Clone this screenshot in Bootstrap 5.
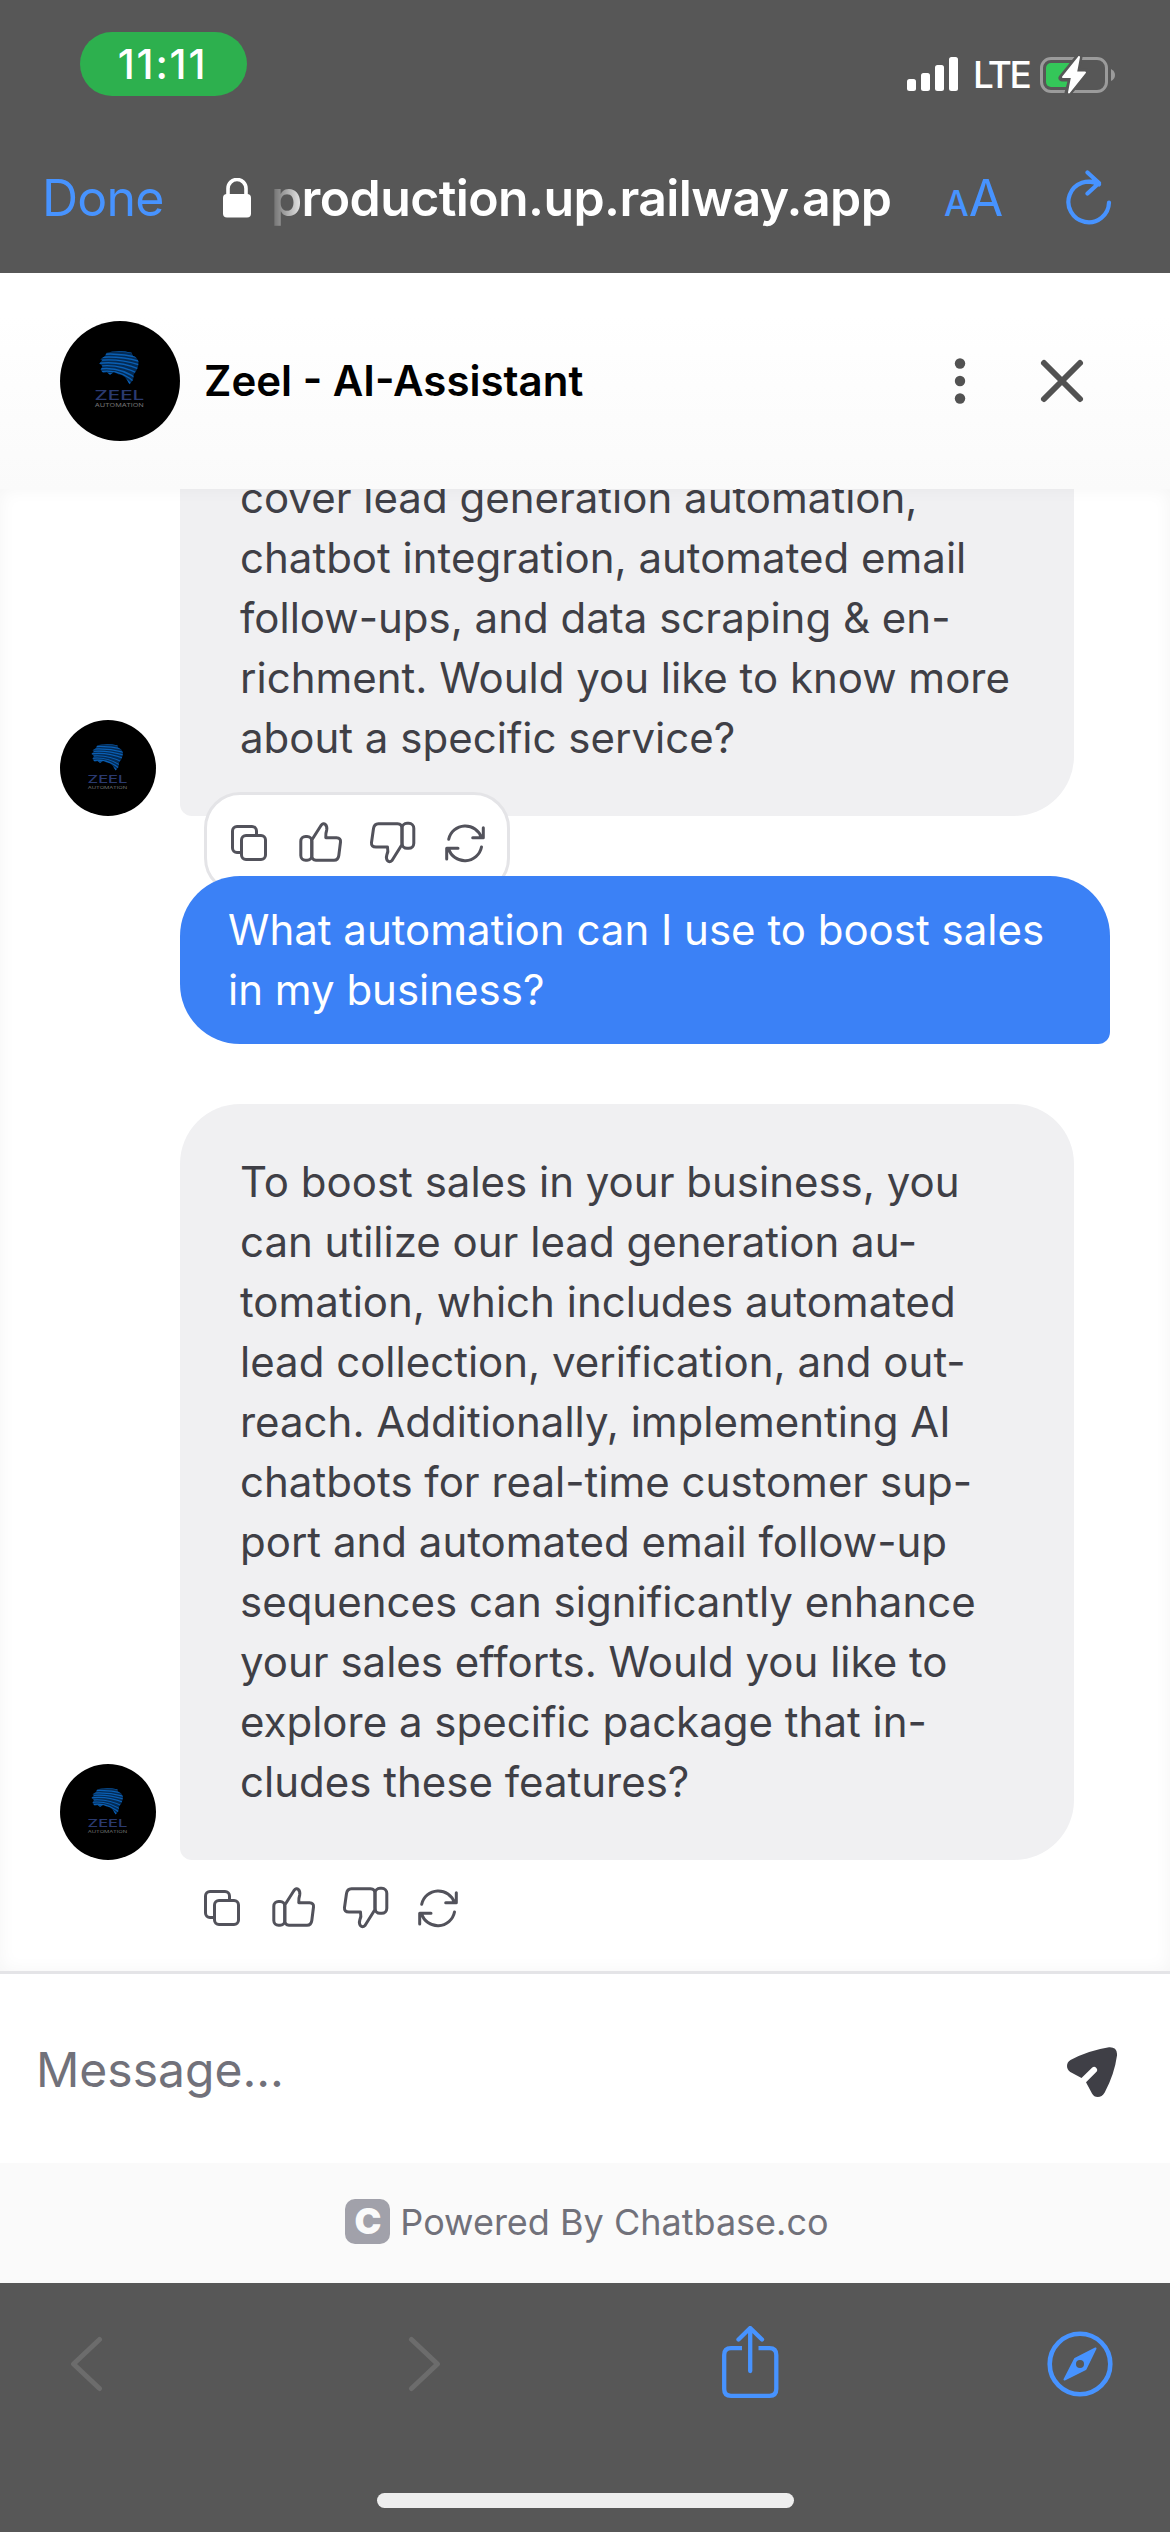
<!DOCTYPE html>
<html lang="en">
<head>
<meta charset="utf-8">
<meta name="viewport" content="width=device-width, initial-scale=1">
<title>Zeel - AI-Assistant</title>
<link href="https://cdn.jsdelivr.net/npm/bootstrap@5.3.0/dist/css/bootstrap.min.css" rel="stylesheet">
<style>
body{font-family:Inter,"Liberation Sans",sans-serif;width:1170px;height:2532px;overflow:hidden;background:#fff}
svg{display:block;flex:none}
.chrome-bar{background:#575757;color:#fff}
.status-row{height:128px;padding:0 55px 0 80px}
.time-pill{width:167px;height:64px;margin-top:32px;padding:1px 2px 0 0;background:#2db04e;border-radius:32px;font-size:41px;font-weight:500;letter-spacing:1.8px}
.signal-group{margin-top:50px;height:50px}
.lte{font-size:37px;font-weight:500;line-height:50px;width:52px;margin:0 15px;letter-spacing:-2.6px}
.nav-row{height:145px;padding:0 58px 6px 42px}
.ios-blue{color:#4793ff}
.done-link{width:181px;font-size:50px;letter-spacing:-.8px;line-height:1}
.url-text{width:628px;margin-left:20px;font-size:50px;font-weight:600;line-height:72px;letter-spacing:-.6px;-webkit-mask-image:linear-gradient(90deg,rgba(0,0,0,.1),#000 36px)}
.text-size{width:62px;margin-left:45px;padding-top:12px;line-height:60px}
.text-size .small-a{font-size:35px;font-weight:500}
.text-size .big-a{font-size:50px}
.chat-head{height:216px;padding:0 84px 0 60px;background:linear-gradient(#fff 20%,#fafafa)}
.chat-title{font-size:42px;font-weight:600;color:#000;margin-left:24px;line-height:60px;padding-bottom:1px}
.chat-body{height:1482px;overflow:hidden;padding:0 60px 39px}
.chat-body::after{content:"";position:absolute;inset:0;box-shadow:inset 0 0 18px rgba(0,0,0,.045);pointer-events:none;z-index:5}
.bubble{font-size:42px;line-height:60px;color:#3f3f46;white-space:nowrap}
.bot-bubble{width:894px;margin-left:24px;padding:48px 60px;background:#f0f0f2;border-radius:60px 60px 60px 12px}
.user-bubble{width:930px;height:168px;margin:60px 0 60px 120px;padding:24px 48px;background:#3b81f6;color:#fff;border-radius:60px 60px 12px 60px;position:relative;z-index:2}
.action-icons{gap:24px;color:#52525b}
.action-icons svg{fill:none;stroke:currentColor;stroke-width:3;stroke-linecap:round;stroke-linejoin:round}
.float-actions{position:absolute;left:144px;bottom:-78px;width:306px;height:102px;border:3px solid #e4e4e7;border-radius:36px;background:#fff;padding-left:18px;z-index:1}
.row-actions{margin:24px 0 0 138px}
.composer{height:192px;border-top:3px solid #e4e4e7;padding:0 53px 0 36px}
.placeholder-text{font-size:48px;color:#71717a;padding-top:2px}
.send-icon{margin-top:6px}
.powered{height:120px;background:#fafafa;color:#71717a;font-size:36px;padding:0 0 3px 4px}
.c-logo{width:45px;height:45px;border-radius:10px;background:#a1a1aa;color:#fafafa;font-size:36px;font-weight:900;line-height:45px;margin-right:10px}
.tool-row{height:162px;padding:0 57px 0 70px}
.forward-icon{margin-left:303px}
.share-icon{margin-left:279px}
.home-area{height:87px}
.home-pill{width:417px;height:15px;border-radius:8px;background:#eee;margin-top:48px}
</style>
</head>
<body>
<svg width="0" height="0" class="position-absolute" aria-hidden="true">
  <defs>
    <clipPath id="brainClip"><path d="M37.300 25.300Q47 23 57.300 25.300L58.500 28Q62 29 63 33L62.500 36L61.500 39L59 42.700L58.500 47L55.500 50.700Q54 47 52 45Q49 42.500 46.700 42.500L43 41L40 43L37.500 41L34.500 41.500L32.500 39L34 36L31.500 34L34 31L32.300 30.500L36 28Z"/></clipPath>
    <symbol id="zeel" viewBox="0 0 96 96">
      <circle cx="48" cy="48" r="48" fill="#000"/>
      <g clip-path="url(#brainClip)">
        <path fill="#042b55" d="M30 22H64V51H30Z"/>
        <path fill="none" stroke="#0a5fb4" stroke-width="1.150" d="M30 25Q47 22 66 27M30 27Q48 25 66 30M30 29.300Q48 27.500 66 33M30 31.600Q48 29.500 66 36M30 34Q48 31.500 66 39.500M30 36.300Q48 33.500 66 44M30 38.600Q48 35.500 64 48M30 41Q48 37 62 51M30 43Q48 38.500 59 53M34 44.500Q49 39.500 56 54"/>
      </g>
      <text x="27.600" y="63" font-size="10.200" textLength="39.800" lengthAdjust="spacingAndGlyphs" fill="#2a3a70" font-weight="500">ZEEL</text>
      <text x="27.800" y="68.700" font-size="4" textLength="39.300" lengthAdjust="spacingAndGlyphs" fill="#707070">AUTOMATION</text>
    </symbol>
    <symbol id="copy" viewBox="0 0 48 48"><path d="M31.500 15V12A4.500 4.500 0 0 0 27 7.500H12A4.500 4.500 0 0 0 7.500 12V29A4.500 4.500 0 0 0 12 33.500H15"/><rect x="16.500" y="16.500" width="24" height="24" rx="4.500"/></symbol>
    <symbol id="thumb" viewBox="0 0 48 48"><rect x="3.800" y="17.500" width="11" height="23.700" rx="4.700"/><path d="M14.800 21L24 6.500Q26.300 3.500 28.500 5.600Q30.300 7.500 29.700 11Q28.500 14.500 28.800 18.700H39.500Q44 19 43.500 23L41.800 36.500Q41.200 41.200 37 41.300H19Q15 41 14.800 36.500Z"/></symbol>
    <symbol id="thumbDown" viewBox="0 0 48 48"><rect x="33" y="4.300" width="11.800" height="25" rx="5"/><path d="M33 25.500L23 41.500Q20.500 44 18.400 41.500Q16.800 39.500 17.800 36Q19.500 32.500 18.500 28H7Q2 28 2.500 23.500L4.500 9.500Q5.200 4.800 9.500 4.700H28.500Q33 4.800 33 9.500Z"/></symbol>
    <symbol id="renew" viewBox="0 0 48 48"><path d="M7.700 20.300A17 17 0 0 1 40.500 18.700M42.300 8.700V18.700H31.700M40.500 28A17 17 0 0 1 7.500 29.500M5.700 40V29.300H17"/></symbol>
  </defs>
</svg>

<header class="chrome-bar">
  <div class="status-row d-flex justify-content-between align-items-start">
    <div class="time-pill d-flex align-items-center justify-content-center">11:11</div>
    <div class="signal-group d-flex">
      <svg width="51" height="50" viewBox="907 50 51 50" fill="#fff"><rect x="907" y="79" width="9" height="12" rx="2.500"/><rect x="921" y="73" width="9" height="18" rx="2.500"/><rect x="935" y="65" width="9" height="26" rx="2.500"/><rect x="949" y="57" width="9" height="34" rx="2.500"/></svg>
      <div class="lte">LTE</div>
      <svg width="75" height="50" viewBox="1040 49 75 50"><rect x="1041.500" y="57.500" width="65" height="33" rx="9.500" fill="none" stroke="#9b9b9b" stroke-width="3"/><path d="M1111 68Q1115 70 1115 74T1111 80Z" fill="#9b9b9b"/><rect x="1046" y="62" width="30" height="24" rx="5" fill="#34c759"/><path d="M1073 62H1090V86H1067Z" fill="#575757"/><path d="M1079 56L1062 77H1072L1068 92L1086 71H1076Z" fill="#fff" stroke="#575757" stroke-width="7" stroke-linejoin="round"/><path d="M1079 56L1063 76H1072L1069 91.500L1085 71.500H1076Z" fill="#fff" stroke="#fff" stroke-width="2" stroke-linejoin="round"/></svg>
    </div>
  </div>
  <div class="nav-row d-flex align-items-center">
    <div class="done-link ios-blue">Done</div>
    <svg width="28" height="40" viewBox="223 178 28 40"><path d="M228 196V188.500A9 9 0 0 1 246 188.500V196" fill="none" stroke="#fff" stroke-width="3.600"/><rect x="223" y="194" width="28" height="23.500" rx="4" fill="#fff"/></svg>
    <div class="url-text text-nowrap">production.up.railway.app</div>
    <div class="text-size ios-blue text-nowrap"><span class="small-a">A</span><span class="big-a">A</span></div>
    <svg class="ms-auto" width="46" height="56" viewBox="1067 171 46 56" fill="none" stroke="#4793ff" stroke-width="4.200" stroke-linecap="round" stroke-linejoin="round"><path d="M1110 203.500A20.300 20.300 0 1 1 1100 185.500M1088.500 173.500L1100 184L1088.500 194.500M1100 184Q1095 182.500 1090 183"/></svg>
  </div>
</header>

<main>
  <div class="chat-head d-flex align-items-center">
    <svg width="120" height="120"><use href="#zeel"/></svg>
    <div class="chat-title">Zeel - AI-Assistant</div>
    <svg class="ms-auto" width="132" height="50" viewBox="954 356 132 50"><g fill="#525252"><circle cx="960" cy="363.500" r="5.200"/><circle cx="960" cy="381" r="5.200"/><circle cx="960" cy="398.500" r="5.200"/></g><path d="M1044 363L1080 399M1080 363L1044 399" stroke="#525252" stroke-width="6" stroke-linecap="round"/></svg>
  </div>

  <section class="chat-body position-relative d-flex flex-column justify-content-end">
    <div class="position-relative d-flex align-items-end">
      <svg width="96" height="96"><use href="#zeel"/></svg>
      <div class="bubble bot-bubble">cover lead generation automation,<br>chatbot integration, automated email<br>follow-ups, and data scraping &amp; en-<br>richment. Would you like to know more<br>about a specific service?</div>
      <div class="float-actions action-icons d-flex align-items-center">
        <svg width="48" height="48"><use href="#copy"/></svg>
        <svg width="48" height="48"><use href="#thumb"/></svg>
        <svg width="48" height="48"><use href="#thumbDown"/></svg>
        <svg width="48" height="48"><use href="#renew"/></svg>
      </div>
    </div>
    <div class="bubble user-bubble">What automation can I use to boost sales<br>in my business?</div>
    <div class="d-flex align-items-end">
      <svg width="96" height="96"><use href="#zeel"/></svg>
      <div class="bubble bot-bubble">To boost sales in your business, you<br>can utilize our lead generation au-<br>tomation, which includes automated<br>lead collection, verification, and out-<br>reach. Additionally, implementing AI<br>chatbots for real-time customer sup-<br>port and automated email follow-up<br>sequences can significantly enhance<br>your sales efforts. Would you like to<br>explore a specific package that in-<br>cludes these features?</div>
    </div>
    <div class="row-actions action-icons d-flex">
      <svg width="48" height="48"><use href="#copy"/></svg>
      <svg width="48" height="48"><use href="#thumb"/></svg>
      <svg width="48" height="48"><use href="#thumbDown"/></svg>
      <svg width="48" height="48"><use href="#renew"/></svg>
    </div>
  </section>

  <div class="composer d-flex align-items-center justify-content-between">
    <div class="placeholder-text">Message...</div>
    <svg class="send-icon" width="50" height="50" viewBox="0 0 50 50"><path d="M42 .2Q50.500-.3 50 8.500Q47.500 27 37.700 45.500Q35 50 30.700 50Q27 50 25 46.500L19 35.300L29 25.300A2.700 2.700 0 0 0 25 20.700L14.500 31L3.300 25Q0 22.500 0 19Q0 15 3.500 13Q21 3.500 42 .2Z" fill="#3f3f46"/></svg>
  </div>
  <div class="powered d-flex align-items-center justify-content-center"><span class="c-logo text-center">C</span><span class="powered-text">Powered By Chatbase.co</span></div>
</main>

<footer class="chrome-bar">
  <div class="tool-row d-flex align-items-center">
    <svg width="34" height="56" viewBox="70 2336 34 56" fill="none" stroke="#6c6c6c" stroke-width="5" stroke-linecap="round" stroke-linejoin="round"><path d="M99.500 2339.500L73.500 2364L99.500 2388.500"/></svg>
    <svg class="forward-icon" width="34" height="56" viewBox="407 2336 34 56" fill="none" stroke="#6c6c6c" stroke-width="5" stroke-linecap="round" stroke-linejoin="round"><path d="M411.500 2339.500L437.500 2364L411.500 2388.500"/></svg>
    <svg class="share-icon" width="60" height="76" viewBox="720 2326 60 76" fill="none" stroke="#4793ff" stroke-width="4.300" stroke-linecap="round" stroke-linejoin="round"><path d="M742 2348.200H731Q724.200 2348.200 724.200 2355V2389Q724.200 2395.800 731 2395.800H769.500Q776.300 2395.800 776.300 2389V2355Q776.300 2348.200 769.500 2348.200H758.500" stroke-linecap="butt"/><path d="M750.200 2329V2371M738.500 2339.500L750.200 2328L762 2339.500"/></svg>
    <svg class="ms-auto" width="66" height="66" viewBox="1047.500 2331.500 66 66"><circle cx="1080.500" cy="2364.500" r="30.300" fill="none" stroke="#4793ff" stroke-width="4.600"/><path fill="#4793ff" stroke="#4793ff" stroke-width="2" stroke-linejoin="round" d="M1096 2349L1075.500 2359.500L1065 2380L1086 2369.500Z"/><circle cx="1080.500" cy="2364.500" r="4" fill="#575757"/></svg>
  </div>
  <div class="home-area d-flex justify-content-center"><div class="home-pill"></div></div>
</footer>
<script src="https://cdn.jsdelivr.net/npm/bootstrap@5.3.0/dist/js/bootstrap.bundle.min.js"></script>
</body>
</html>
